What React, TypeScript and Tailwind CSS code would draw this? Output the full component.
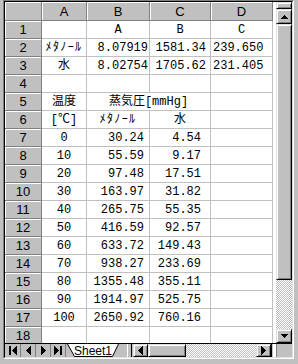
import React from 'react';

const head =
  "flex items-center justify-center bg-[#c0c0c0] border-r border-b border-r-[#808080] border-b-[#808080] shadow-[inset_1px_1px_0_#ffffff] font-['Liberation_Sans',sans-serif] text-[13px] leading-none text-black";
const cell =
  "flex items-center border-r border-b border-[#c0c0c0] whitespace-nowrap overflow-visible font-['Liberation_Mono','Noto_Sans_CJK_JP',monospace] text-[12px] leading-none text-black";
const raised =
  "bg-[#c0c0c0] border border-t-[#dfdfdf] border-l-[#dfdfdf] border-r-black border-b-black shadow-[inset_1px_1px_0_#ffffff,inset_-1px_-1px_0_#808080]";
const checker =
  "bg-[repeating-conic-gradient(#c0c0c0_0%_25%,#ffffff_0%_50%)] bg-size-[2px_2px]";

const table = [
  ['0', '30.24', '4.54'],
  ['10', '55.59', '9.17'],
  ['20', '97.48', '17.51'],
  ['30', '163.97', '31.82'],
  ['40', '265.75', '55.35'],
  ['50', '416.59', '92.57'],
  ['60', '633.72', '149.43'],
  ['70', '938.27', '233.69'],
  ['80', '1355.48', '355.11'],
  ['90', '1914.97', '525.75'],
  ['100', '2650.92', '760.16'],
];

const Arrow = ({ dir }: { dir: 'l' | 'r' | 'u' | 'd' | 'first' | 'last' }) => {
  if (dir === 'u')
    return (
      <svg width="7" height="4" viewBox="0 0 7 4" shapeRendering="crispEdges">
        <polygon points="3.5,0 7,4 0,4" fill="#000" />
      </svg>
    );
  if (dir === 'd')
    return (
      <svg width="7" height="4" viewBox="0 0 7 4" shapeRendering="crispEdges">
        <polygon points="0,0 7,0 3.5,4" fill="#000" />
      </svg>
    );
  if (dir === 'l')
    return (
      <svg width="5" height="9" viewBox="0 0 5 9" shapeRendering="crispEdges">
        <polygon points="5,0 5,9 0,4.5" fill="#000" />
      </svg>
    );
  if (dir === 'r')
    return (
      <svg width="5" height="9" viewBox="0 0 5 9" shapeRendering="crispEdges">
        <polygon points="0,0 5,4.5 0,9" fill="#000" />
      </svg>
    );
  if (dir === 'first')
    return (
      <svg width="8" height="9" viewBox="0 0 8 9" shapeRendering="crispEdges">
        <rect x="0" y="0" width="2" height="9" fill="#000" />
        <polygon points="8,0 8,9 3,4.5" fill="#000" />
      </svg>
    );
  return (
    <svg width="8" height="9" viewBox="0 0 8 9" shapeRendering="crispEdges">
      <polygon points="0,0 5,4.5 0,9" fill="#000" />
      <rect x="6" y="0" width="2" height="9" fill="#000" />
    </svg>
  );
};

const Sheet = () => (
  <div className="grid grid-cols-[37px_45px_63px_61px_62px] grid-rows-[19px_repeat(18,18px)] bg-white">
    <div className={head} />
    <div className={head}>A</div>
    <div className={head}>B</div>
    <div className={head}>C</div>
    <div className={head}>D</div>

    <div className={head}>1</div>
    <div className={cell} />
    <div className={`${cell} justify-center`}>A</div>
    <div className={`${cell} justify-center`}>B</div>
    <div className={`${cell} justify-center`}>C</div>

    <div className={head}>2</div>
    <div className={`${cell} justify-center tracking-[1.4px]`}>ﾒﾀﾉｰﾙ</div>
    <div className={`${cell} justify-end pr-[1px]`}>8.07919</div>
    <div className={`${cell} justify-end pr-[4px]`}>1581.34</div>
    <div className={`${cell} pl-[2px]`}>239.650</div>

    <div className={head}>3</div>
    <div className={`${cell} justify-center`}>水</div>
    <div className={`${cell} justify-end pr-[1px]`}>8.02754</div>
    <div className={`${cell} justify-end pr-[4px]`}>1705.62</div>
    <div className={`${cell} pl-[2px]`}>231.405</div>

    <div className={head}>4</div>
    <div className={cell} />
    <div className={cell} />
    <div className={cell} />
    <div className={cell} />

    <div className={head}>5</div>
    <div className={`${cell} justify-center`}>温度</div>
    <div className={`${cell} col-span-2 justify-center`}>蒸気圧[mmHg]</div>
    <div className={cell} />

    <div className={head}>6</div>
    <div className={`${cell} justify-center`}>[℃]</div>
    <div className={`${cell} justify-center tracking-[1.4px]`}>ﾒﾀﾉｰﾙ</div>
    <div className={`${cell} justify-center`}>水</div>
    <div className={cell} />

    {table.map((r, i) => (
      <React.Fragment key={r[0]}>
        <div className={head}>{i + 7}</div>
        <div className={`${cell} justify-center`}>{r[0]}</div>
        <div className={`${cell} justify-end pr-[5px]`}>{r[1]}</div>
        <div className={`${cell} justify-end pr-[9px]`}>{r[2]}</div>
        <div className={cell} />
      </React.Fragment>
    ))}

    <div className={head}>18</div>
    <div className={cell} />
    <div className={cell} />
    <div className={cell} />
    <div className={cell} />
  </div>
);

const VScroll = () => (
  <div className="w-[19px] flex flex-col bg-white pl-[3px]">
    <div className={`h-[7px] ${raised}`} />
    <div className={`h-[15px] flex items-center justify-center ${raised}`}>
      <Arrow dir="u" />
    </div>
    <div className={`flex-1 ${raised}`} />
    <div className={`h-[49px] ${checker}`} />
    <div className={`h-[14px] flex items-center justify-center ${raised}`}>
      <Arrow dir="d" />
    </div>
  </div>
);

const TabBar = () => (
  <div className="h-[14px] flex border-t border-black bg-[#c0c0c0]">
    <div className="w-[1px]" />
    <div className="flex">
      <div className="w-[15px] flex items-center justify-center border-r border-[#808080]">
        <Arrow dir="first" />
      </div>
      <div className="w-[15px] flex items-center justify-center border-r border-[#808080]">
        <Arrow dir="l" />
      </div>
      <div className="w-[15px] flex items-center justify-center border-r border-[#808080]">
        <Arrow dir="r" />
      </div>
      <div className="w-[15px] flex items-center justify-center border-r border-[#808080]">
        <Arrow dir="last" />
      </div>
    </div>
    <div className="relative w-[54px] flex items-center justify-center">
      <svg className="absolute left-0 top-0" width="54" height="13" viewBox="0 0 54 13">
        <polygon points="1.5,0 8.5,12.5 46.5,12.5 52.5,0" fill="#ffffff" />
        <polyline points="1.5,0 8.5,12.5 46.5,12.5 52.5,0" fill="none" stroke="#000" strokeWidth="1" />
      </svg>
      <span className="relative font-['Liberation_Sans',sans-serif] text-[12px] leading-none text-black">
        Sheet1
      </span>
    </div>
    <div className="w-[13px] flex justify-end items-stretch pr-[1px]">
      <div className="w-[5px] border-l border-r border-l-white border-r-black bg-[#c0c0c0]" />
    </div>
    <div className={`w-[15px] flex items-center justify-center ${raised}`}>
      <Arrow dir="l" />
    </div>
    <div className={`w-[38px] ${raised}`} />
    <div className={`flex-1 ${checker}`} />
    <div className={`w-[15px] flex items-center justify-center ${raised}`}>
      <Arrow dir="r" />
    </div>
    <div className="w-[2px] border-l border-black" />
    <div className="w-[3px] bg-white" />
    <div className="w-[16px] border-l border-[#808080] bg-[#c0c0c0]" />
  </div>
);

export default function App() {
  return (
    <div className="w-[298px] h-[364px] bg-[#c0c0c0] pl-[3px] pr-[4px] pb-[5px] flex">
      <div className="flex-1 flex border border-t-[#808080] border-l-[#808080] border-r-white border-b-white">
        <div className="flex-1 flex flex-col border border-t-black border-l-black border-r-[#dfdfdf] border-b-[#dfdfdf] min-w-0">
          <div className="flex-1 flex min-h-0">
            <div className="flex-1 overflow-hidden min-w-0">
              <Sheet />
            </div>
            <VScroll />
          </div>
          <TabBar />
        </div>
      </div>
    </div>
  );
}
